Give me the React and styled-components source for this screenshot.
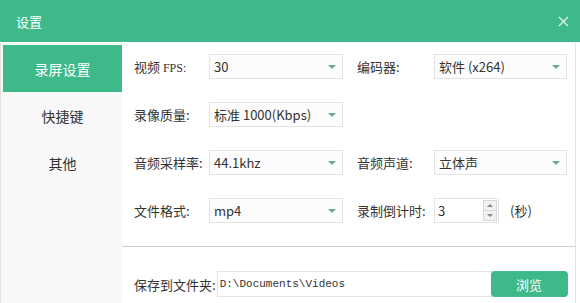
import React from 'react'
import styled, { createGlobalStyle } from 'styled-components'

const GlobalStyle = createGlobalStyle`
  html, body {
    margin: 0;
    padding: 0;
    background: #ffffff;
  }
  body {
    font-family: "Noto Sans CJK SC", "Noto Sans", sans-serif;
    color: #333333;
  }
`

const green = '#3eb98a'

const Window = styled.div`
  width: 580px;
  height: 303px;
  display: flex;
  flex-direction: column;
  overflow: hidden;
  background: #ffffff;
`

const TitleBar = styled.div`
  height: 42px;
  flex-shrink: 0;
  background: ${green};
  display: flex;
  align-items: center;
  justify-content: space-between;
  padding: 0 7px 0 16px;
  color: #ffffff;
  font-size: 13px;
`

const Close = styled.div`
  width: 20px;
  height: 20px;
  display: flex;
  align-items: center;
  justify-content: center;
  opacity: 0.85;
`

const Body = styled.div`
  flex: 1;
  display: flex;
  padding-top: 1px;
  padding-right: 4px;
`

const Sidebar = styled.div`
  width: 119px;
  flex-shrink: 0;
  border-left: 1px solid #e4e4e4;
  padding-left: 2px;
  padding-top: 2px;
  background: #f8f8f8;
  display: flex;
  flex-direction: column;
`

const NavItem = styled.div`
  height: 47px;
  display: flex;
  align-items: center;
  justify-content: center;
  font-size: 14px;
  color: ${p => (p.active ? '#ffffff' : '#333333')};
  background: ${p => (p.active ? green : 'transparent')};
`

const Content = styled.div`
  flex: 1;
  display: flex;
  flex-direction: column;
  border-right: 1px solid #e2e2e2;
`

const Form = styled.div`
  display: grid;
  grid-template-columns: 75px 134px 91px 133px;
  row-gap: 23px;
  padding: 11px 0 23px 12px;
  border-bottom: 1px solid #cfcfcf;
  align-items: center;
`

const Label = styled.div`
  font-size: 13px;
  white-space: nowrap;
  color: #333333;
  padding-left: ${p => (p.right ? '14px' : '0')};
`

const Serif = styled.span`
  font-family: "Liberation Serif", serif;
  font-size: 12px;
`

const SelectBox = styled.div`
  height: 25px;
  box-sizing: border-box;
  border: 1px solid #e3e3e3;
  background: #fcfcfc;
  display: flex;
  align-items: center;
  justify-content: space-between;
  padding: 0 6px 0 4px;
  font-size: 13px;
  color: #333333;
  white-space: nowrap;
`

const Arrow = styled.span`
  width: 0;
  height: 0;
  border-left: 4px solid transparent;
  border-right: 4px solid transparent;
  border-top: 4px solid #6aab95;
`

const SpinRow = styled.div`
  display: flex;
  align-items: center;
  gap: 11px;
  font-size: 13px;
`

const SpinBox = styled.div`
  width: 65px;
  height: 25px;
  box-sizing: border-box;
  border: 1px solid #e3e3e3;
  display: flex;
  align-items: center;
  justify-content: space-between;
  padding: 0 1px 0 3px;
  font-size: 13px;
`

const SpinButtons = styled.div`
  width: 14px;
  height: 21px;
  display: flex;
  flex-direction: column;
  border: 1px solid #d8d8d8;
  box-sizing: border-box;
`

const SpinButton = styled.div`
  flex: 1;
  display: flex;
  align-items: center;
  justify-content: center;
  background: #f1f1f1;
  & + & {
    border-top: 1px solid #d8d8d8;
  }
`

const SmallTri = styled.span`
  width: 0;
  height: 0;
  border-left: 3px solid transparent;
  border-right: 3px solid transparent;
  ${p => (p.up ? 'border-bottom: 3px solid #8a8a8a;' : 'border-top: 3px solid #8a8a8a;')}
`

const SaveRow = styled.div`
  display: flex;
  align-items: center;
  padding: 24px 0 0 12px;
`

const PathInput = styled.div`
  width: 276px;
  height: 26px;
  box-sizing: border-box;
  border: 1px solid #e3e3e3;
  display: flex;
  align-items: center;
  padding-left: 2px;
  font-family: "Liberation Mono", monospace;
  font-size: 11px;
  color: #333333;
  margin-left: 1px;
`

const BrowseButton = styled.div`
  width: 77px;
  height: 26px;
  margin-left: -2px;
  border-radius: 4px;
  background: ${green};
  color: #ffffff;
  font-size: 13px;
  display: flex;
  align-items: center;
  justify-content: center;
`

const Select = ({ value }) => (
  <SelectBox>
    <span>{value}</span>
    <Arrow />
  </SelectBox>
)

const App = () => (
  <Window>
    <GlobalStyle />
    <TitleBar>
      <span>设置</span>
      <Close>
        <svg width="11" height="11" viewBox="0 0 11 11">
          <path d="M1 1 L10 10 M10 1 L1 10" stroke="#ffffff" strokeWidth="1.3" />
        </svg>
      </Close>
    </TitleBar>
    <Body>
      <Sidebar>
        <NavItem active>录屏设置</NavItem>
        <NavItem>快捷键</NavItem>
        <NavItem>其他</NavItem>
      </Sidebar>
      <Content>
        <Form>
          <Label>视频 <Serif>FPS:</Serif></Label>
          <Select value="30" />
          <Label right>编码器:</Label>
          <Select value="软件 (x264)" />

          <Label>录像质量:</Label>
          <Select value="标准 1000(Kbps)" />
          <div />
          <div />

          <Label>音频采样率:</Label>
          <Select value="44.1khz" />
          <Label right>音频声道:</Label>
          <Select value="立体声" />

          <Label>文件格式:</Label>
          <Select value="mp4" />
          <Label right>录制倒计时:</Label>
          <SpinRow>
            <SpinBox>
              <span>3</span>
              <SpinButtons>
                <SpinButton><SmallTri up /></SpinButton>
                <SpinButton><SmallTri /></SpinButton>
              </SpinButtons>
            </SpinBox>
            <span>(秒)</span>
          </SpinRow>
        </Form>
        <SaveRow>
          <Label>保存到文件夹:</Label>
          <PathInput>D:\Documents\Videos</PathInput>
          <BrowseButton>浏览</BrowseButton>
        </SaveRow>
      </Content>
    </Body>
  </Window>
)

export default App
